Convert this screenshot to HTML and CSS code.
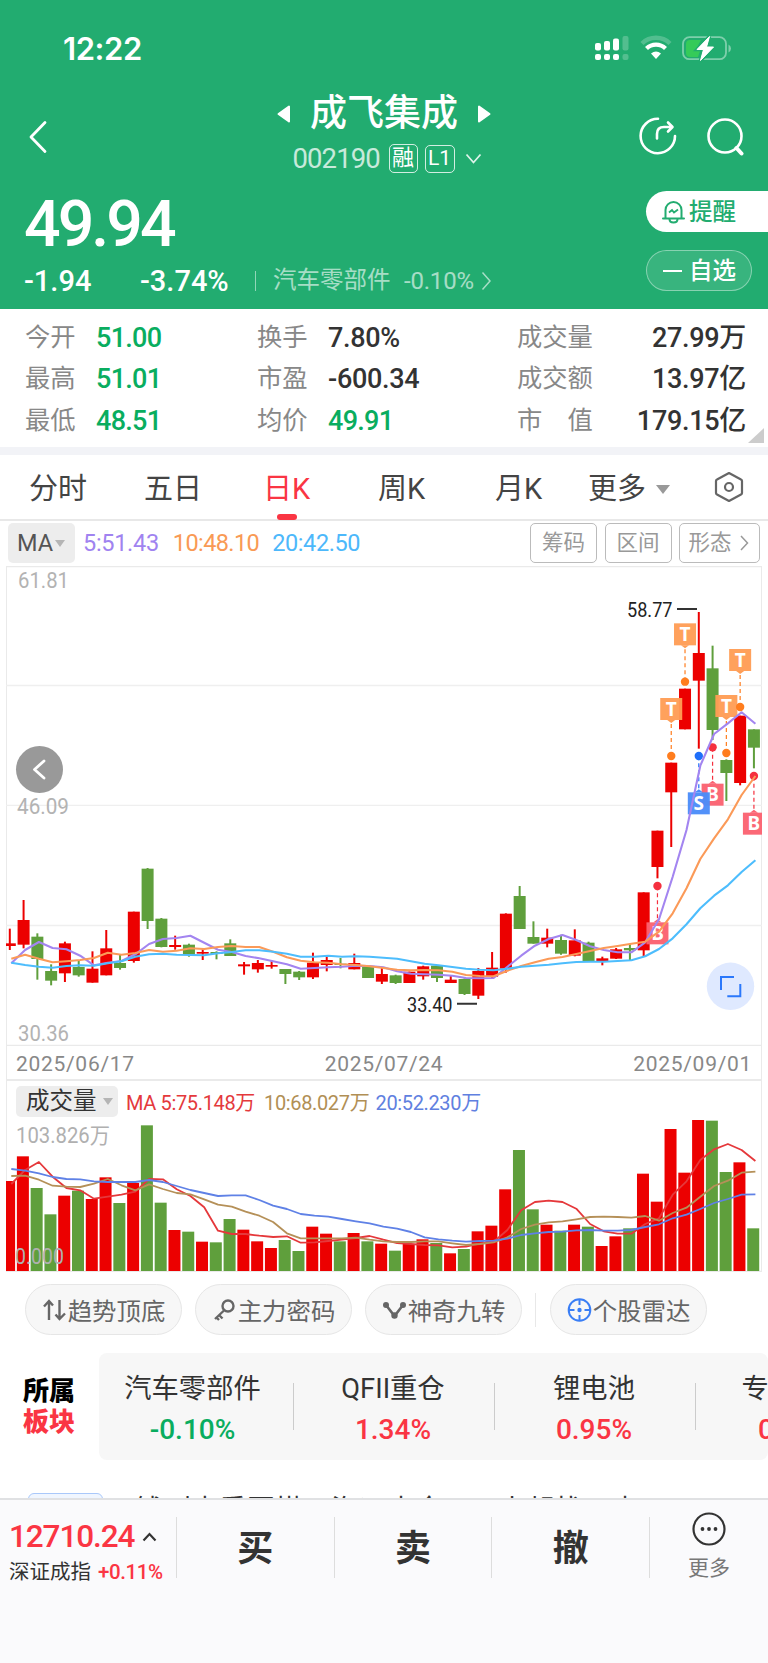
FILE: index.html
```html
<!DOCTYPE html>
<html lang="zh-CN">
<head>
<meta charset="utf-8">
<title>成飞集成 002190</title>
<link rel="stylesheet" href="styles.css">
</head>
<body>
<div class="app">
  <header class="head">
    <div class="status">
      <span class="clock">12:22</span>
      <svg class="status-icons" width="140" height="28" viewBox="0 0 140 28">
        <g fill="#fff">
          <rect x="0" y="8" width="6" height="7.5" rx="2"/><rect x="9" y="6" width="6" height="9.5" rx="2"/><rect x="18" y="3.5" width="6" height="12" rx="2"/>
          <rect x="0" y="19" width="6" height="6" rx="2"/><rect x="9" y="19" width="6" height="6" rx="2"/><rect x="18" y="19" width="6" height="6" rx="2"/>
          <g opacity=".22"><rect x="27.5" y="1" width="6" height="14.500" rx="2"/><rect x="27.500" y="19" width="6" height="6" rx="2"/></g>
        </g>
        <g fill="none" stroke="#fff">
          <path d="M47 8.500a20 20 0 0 1 28 0" stroke-width="4.500" opacity=".22"/>
          <path d="M51.500 13.500a13.500 13.500 0 0 1 19 0" stroke-width="4.200"/>
        </g>
        <path d="M56 18.500q5-4 10 0l-5 5.500z" fill="#fff"/>
        <rect x="88" y="2.200" width="43" height="22" rx="6.500" fill="none" stroke="#fff" stroke-opacity=".42" stroke-width="1.800"/>
        <path d="M133.500 9.500q2.500 1.500 2.500 4t-2.500 4z" fill="#fff" opacity=".42"/>
        <path d="M95 5h11l-6 11h5l-2 6H95q-4 0-4-4V9q0-4 4-4z" fill="#35cb59"/>
        <path d="M114.500 1.500L102 14.500h6.500L105.500 25.500 118.500 12h-7z" fill="#fff" stroke="#22ac70" stroke-width="3.500" paint-order="stroke"/>
        <path d="M114.500 1.500L102 14.500h6.500L105.500 25.500 118.500 12h-7z" fill="#fff" stroke="#fff" stroke-width="1" stroke-linejoin="round"/>
      </svg>
    </div>
    <div class="nav">
      <svg class="back" width="20" height="34" viewBox="0 0 20 34"><path d="M17 2.500L3 17l14 14.500" fill="none" stroke="#fff" stroke-width="2.800" stroke-linecap="round" stroke-linejoin="round"/></svg>
      <div class="title-box">
        <div class="title-row">
          <svg width="14" height="18" viewBox="0 0 14 18"><path d="M12 1.500v15L1.500 9z" fill="#fff" stroke="#fff" stroke-linejoin="round" stroke-width="2"/></svg>
          <h1 class="title">成飞集成</h1>
          <svg width="14" height="18" viewBox="0 0 14 18"><path d="M2 1.500v15L12.500 9z" fill="#fff" stroke="#fff" stroke-linejoin="round" stroke-width="2"/></svg>
        </div>
        <div class="code-row">
          <span class="code">002190</span><span class="badge">融</span><span class="badge badge-l1">L1</span>
          <svg width="17" height="12" viewBox="0 0 17 12"><path d="M1.500 1.500l7 8 7-8" fill="none" stroke="#fff" stroke-width="1.800" opacity=".85"/></svg>
        </div>
      </div>
      <div class="nav-icons">
        <svg width="40" height="40" viewBox="0 0 40 40" fill="none" stroke="#fff" stroke-width="2.600" stroke-linecap="round" stroke-linejoin="round"><path d="M20 2.800A17.200 17.200 0 1 0 37 20M19 22.500v-4.500q0-7 7-7h7M30 6.500l4.500 4.500L30 15.500"/></svg>
        <svg width="40" height="40" viewBox="0 0 40 40" fill="none" stroke="#fff" stroke-width="2.600"><circle cx="20" cy="20" r="16.500"/><path d="M31.500 32l5 5.500" stroke-width="4" stroke-linecap="round"/></svg>
      </div>
    </div>
    <div class="quote">
      <div class="quote-main">
        <div class="price">49.94</div>
        <div class="change">
          <span class="delta">-1.94</span><span class="pct">-3.74%</span><i class="bar"></i>
          <span class="industry">汽车零部件</span><span class="industry-pct">-0.10%</span>
          <svg width="11" height="20" viewBox="0 0 11 20"><path d="M1.500 1.500L9 10 1.500 18.500" fill="none" stroke="#fff" stroke-width="1.500" opacity=".6"/></svg>
        </div>
      </div>
      <div class="quote-side">
        <div class="pill pill-alert">
          <svg width="23" height="24" viewBox="0 0 23 24" fill="none" stroke="#22ac70" stroke-width="2"><path d="M3.500 18V10a8 8 0 0 1 16 0v8M1 18.500h21" stroke-linecap="round"/><path d="M7 12.500l3-2.500 2 2.500 4-3" stroke-width="1.800"/><path d="M7.500 19q0 3.500 4 3.500t4-3.500"/></svg>
          <span>提醒</span>
        </div>
        <div class="pill pill-fav"><i class="minus"></i><span>自选</span></div>
      </div>
    </div>
  </header>

  <section class="stats">
    <dl class="stat-col c1"><dt>今开</dt><dd class="g">51.00</dd><dt>最高</dt><dd class="g">51.01</dd><dt>最低</dt><dd class="g">48.51</dd></dl>
    <dl class="stat-col c2"><dt>换手</dt><dd>7.80%</dd><dt>市盈</dt><dd>-600.34</dd><dt>均价</dt><dd class="g">49.91</dd></dl>
    <dl class="stat-col c3"><dt>成交量</dt><dd>27.99万</dd><dt>成交额</dt><dd>13.97亿</dd><dt>市　值</dt><dd>179.15亿</dd></dl>
    <i class="corner"></i>
  </section>

  <nav class="tabs">
    <span>分时</span><span>五日</span><span class="on">日K</span><span>周K</span><span>月K</span><span class="more">更多<i class="tri"></i></span>
    <svg width="30" height="32" viewBox="0 0 30 32" fill="none" stroke="#666" stroke-width="2.200" stroke-linejoin="round"><path d="M15 2l12 6.500q1 .5 1 1.500v12q0 1-1 1.500L15 30 3 23.500q-1-.5-1-1.500V10q0-1 1-1.500z"/><circle cx="15" cy="16" r="4"/></svg>
  </nav>

  <div class="ma-row">
    <span class="chip">MA<i class="tri small"></i></span>
    <span class="ma purple">5:51.43</span><span class="ma orange">10:48.10</span><span class="ma blue">20:42.50</span>
    <div class="tools"><span>筹码</span><span>区间</span><span>形态 <svg width="9" height="18" viewBox="0 0 9 18"><path d="M1 2l6.500 7L1 16" fill="none" stroke="#999" stroke-width="1.500"/></svg></span></div>
  </div>

  <svg id="kline" class="chart" width="768" height="480" viewBox="0 566 768 480"></svg>
  <div class="dates"><span>2025/06/17</span><span>2025/07/24</span><span>2025/09/01</span></div>
  <div class="vol-head">
    <span class="chip vol-chip">成交量<i class="tri small"></i></span>
    <span class="red">MA 5:75.148万</span><span class="tan">10:68.027万</span><span class="indigo">20:52.230万</span>
  </div>
  <svg id="volume" class="chart" width="768" height="152" viewBox="0 1120 768 152"></svg>

  <div class="pills">
    <span class="tool"><svg width="25" height="24" viewBox="0 0 25 24" fill="none" stroke="#666" stroke-width="2.400"><path d="M7 22V3M2 8.500L7 3l4 4.500M17.500 2v19M23 15.500L17.500 21l-4-4.500"/></svg>趋势顶底</span>
    <span class="tool"><svg width="25" height="24" viewBox="0 0 25 24" fill="none" stroke="#666" stroke-width="2.400"><circle cx="16" cy="8" r="5.500"/><path d="M12 12.500L3 21M7 17l3.500 3.500M4.500 19.500l2.500 2.500"/></svg>主力密码</span>
    <span class="tool"><svg width="25" height="24" viewBox="0 0 25 24" fill="none" stroke="#666" stroke-width="2.600"><path d="M4 7l8.500 11L21 7"/><g fill="#666" stroke="none"><circle cx="4" cy="7" r="3"/><circle cx="21" cy="7" r="3"/><circle cx="12.500" cy="17.500" r="3.200"/></g></svg>神奇九转</span>
    <i class="split"></i>
    <span class="tool"><svg width="25" height="24" viewBox="0 0 25 24" fill="none" stroke="#3a7ef5" stroke-width="2"><circle cx="12.500" cy="12" r="10.800"/><path d="M12.500 1v6M12.500 17v6M1.500 12h6M17.500 12h6"/><circle cx="12.500" cy="12" r="2.200" fill="#3a7ef5" stroke="none"/></svg>个股雷达</span>
  </div>

  <section class="sector">
    <div class="sector-label"><b>所属</b><b class="hot">板块</b></div>
    <div class="sector-list">
      <div class="item"><span>汽车零部件</span><em class="g">-0.10%</em></div>
      <div class="item"><span>QFII重仓</span><em>1.34%</em></div>
      <div class="item"><span>锂电池</span><em>0.95%</em></div>
      <div class="item"><span>专精特新</span><em>0.95%</em></div>
    </div>
  </section>

  <div class="news"><i class="tag"></i><span>钱到央重回搭，海运内全，一上起找，内</span></div>

  <footer class="foot">
    <div class="index">
      <div class="idx-top">12710.24<svg width="15" height="10" viewBox="0 0 15 10"><path d="M1.500 8.500l6-6.500 6 6.500" fill="none" stroke="#333" stroke-width="2.200"/></svg></div>
      <div class="idx-sub">深证成指<span>+0.11%</span></div>
    </div>
    <div class="act">买</div><div class="act">卖</div><div class="act">撤</div>
    <div class="act-more"><svg width="36" height="36" viewBox="0 0 36 36"><circle cx="18" cy="18" r="15.500" fill="none" stroke="#333" stroke-width="2.200"/><g fill="#333"><circle cx="11.500" cy="18" r="1.900"/><circle cx="18" cy="18" r="1.900"/><circle cx="24.500" cy="18" r="1.900"/></g></svg><span>更多</span></div>
  </footer>
</div>
<script src="chart.js"></script>
</body>
</html>
```
FILE: styles.css
```css
* { box-sizing: border-box; }
body { margin: 0; background: #fff; font-family: Roboto, "Noto Sans CJK SC", sans-serif; color: #333; }
.app { width: 768px; height: 1663px; overflow: hidden; display: flex; flex-direction: column; }
.app > * { flex-shrink: 0; }
svg { display: block; flex-shrink: 0; }
i, em { font-style: normal; }
span, h1 { white-space: nowrap; }
.g { color: #09ad5f !important; }

/* header */
.head { height: 309px; background: #22ac70; color: #fff; display: flex; flex-direction: column; }
.status { height: 98px; padding: 0 33px 0 63px; display: flex; justify-content: space-between; align-items: center; }
.clock { font: 600 31px/98px Inter, sans-serif; letter-spacing: -.4px; }
.nav { height: 90px; padding: 0 23px 0 28px; display: grid; grid-template-columns: 116px 1fr 107px; }
.back { margin-top: 22px; }
.title-box { display: flex; flex-direction: column; align-items: center; padding-right: 6px; }
.title-row { height: 34px; display: flex; align-items: center; gap: 19px; margin: -1px 8px 0 0; }
.title { margin: 0; font-size: 37px; line-height: 34px; font-weight: 500; }
.code-row { height: 32px; margin: 12px 2px 0 0; display: flex; align-items: center; }
.code { font-size: 27.500px; letter-spacing: -.9px; opacity: .75; line-height: 34px; margin-right: 8px; width: 88px; }
.badge { width: 29px; height: 29px; border: 1.500px solid rgba(255,255,255,.8); border-radius: 5px; font-size: 22px; line-height: 26px; text-align: center; margin: -1px 7px 0 0; }
.badge-l1 { width: 30px; height: 28px; font-size: 21px; line-height: 25px; margin-right: 10px; }
.nav-icons { display: flex; justify-content: space-between; padding: 18px 0 0; }
.quote { display: flex; justify-content: space-between; height: 121px; }
.quote-main { padding-left: 24px; }
.price { font-size: 64.500px; line-height: 72px; height: 74px; font-weight: 500; letter-spacing: -3px; }
.change { display: flex; align-items: center; height: 38px; font-size: 29px; }
.delta { width: 116px; font-weight: 500; }
.pct { width: 115px; font-weight: 500; }
.bar { width: 1px; height: 20px; background: rgba(255,255,255,.5); margin-right: 17px; }
.industry { font-size: 23.500px; opacity: .6; width: 131px; line-height: 32px; padding-bottom: 2px; }
.industry-pct { font-size: 24px; opacity: .6; width: 77px; letter-spacing: -.2px; }
.quote-side { width: 122px; padding-top: 3px; display: flex; flex-direction: column; gap: 18px; }
.pill { height: 41px; display: flex; align-items: center; padding-left: 16px; font-size: 23.500px; line-height: 38px; font-weight: 500; }
.pill svg { margin-right: 4px; }
.pill-alert { background: #fff; color: #22ac70; border-radius: 21px 0 0 21px; }
.pill-fav { width: 106px; border: 1.500px solid rgba(255,255,255,.4); background: rgba(255,255,255,.1); border-radius: 21px; }
.minus { width: 19px; height: 2px; background: #fff; margin-right: 7px; }

/* statistics */
.stats { height: 146px; padding: 9px 22px 0 25px; display: flex; border-bottom: 8px solid #f2f3f7; position: relative; }
.stat-col { margin: 0; display: grid; grid-auto-rows: 41.300px; line-height: 41px; grid-template-columns: 71px 1fr; }
.c1 { width: 232px; }
.c2 { width: 260px; }
.c3 { width: 229px; grid-template-columns: 100px 1fr; }
.c3 dd { text-align: right; }
.stat-col dt { font-size: 25.300px; color: #888; position: relative; top: -1px; }
.stat-col dd { margin: 0; font-size: 27px; font-weight: 500; letter-spacing: -.3px; color: #333; white-space: nowrap; }
.c1 dd, .c2 dd.g { letter-spacing: -.7px; }
.corner { position: absolute; right: 4px; bottom: 4px; border-left: 16px solid transparent; border-bottom: 15px solid #ccc; }

/* period tabs */
.tabs { height: 66px; padding-left: 29px; border-bottom: 2px solid #e8e8e8; display: grid; grid-template-columns: 115px 119px 115px 117px 93px 126px 1fr; align-items: center; font-size: 29px; line-height: 68px; color: #444; }
.tabs span { height: 64px; }
.tabs .on { color: #fa3543; position: relative; }
.tabs .on::after { content: ""; position: absolute; left: 14px; bottom: -1px; width: 20px; height: 6px; border-radius: 3px; background: #fa3543; }
.tabs .more { display: flex; align-items: center; padding-top: 4px; }
.tri { border: 7px solid transparent; border-top: 9px solid #999; border-bottom: 0; margin-left: 10px; }
.tri.small { border-width: 7px 5px 0; border-top-color: #b5b5b5; margin-left: 2px; }

.ma-row { height: 45px; padding: 0 8px 1px; display: flex; align-items: center; }
.chip { background: #ededed; border-radius: 5px; display: flex; align-items: center; }
.ma-row .chip { width: 67px; height: 40px; padding-left: 9px; font-size: 23.500px; color: #555; margin-right: 8px; }
.ma { font-size: 23.500px; margin-right: 14px; letter-spacing: -.3px; }
.ma.orange { letter-spacing: -.6px; margin-right: 13px; }
.ma.blue { letter-spacing: -.4px; }
.purple { color: #a083f0; } .orange { color: #f99a55; } .blue { color: #4db8fb; }
.tools { margin-left: auto; display: flex; gap: 7.500px; }
.tools span { height: 40px; width: 67px; border: 1.500px solid #bbb; border-radius: 5px; display: flex; align-items: center; justify-content: center; font-size: 21.500px; line-height: 34px; padding-bottom: 1px; color: #999; gap: 8px; }
.tools span:last-child { width: 81px; padding-right: 2px; }

.chart text { font-family: Roboto, "Noto Sans CJK SC", sans-serif; }
.chart .mark { font-family: "Noto Sans", sans-serif; }
.dates { height: 36px; margin: -1px 6px 0; padding: 0 9px; border: 1px solid #eaeaea; border-top: 0; border-bottom-width: 2px; display: flex; justify-content: space-between; font-size: 21px; line-height: 39px; letter-spacing: .7px; color: #888; }

.vol-head { height: 39px; margin: 0 6px; border: 1px solid #eaeaea; border-width: 0 1px; padding: 4px 0 2px 9px; display: flex; align-items: center; font-size: 20px; letter-spacing: -.35px; }
.vol-chip { width: 102px; height: 31px; padding-left: 10px; font-size: 23.500px; margin-right: 8px; line-height: 31px; letter-spacing: 0; }
.vol-chip .tri { margin-left: 6px; }
.red { color: #e4393c; width: 138px; } .tan { color: #b18f55; width: 111.500px; } .indigo { color: #6080e0; }

/* shortcut pills */
.pills { height: 81px; padding: 12px 0 0 25px; display: flex; gap: 13px; }
.tool { width: 157px; height: 51px; background: #f7f7f7; border: 1px solid #e6e6e6; border-radius: 26px; display: flex; align-items: center; justify-content: center; font-size: 24.400px; color: #666; gap: 1px; }
.split { width: 1px; height: 34px; margin: 9px 1px 0 0; background: #e8e8e8; }

/* sectors */
.sector { display: flex; height: 107px; padding-left: 23px; }
.sector-label { width: 76px; display: flex; flex-direction: column; padding-top: 23px; font-size: 26px; line-height: 31px; font-weight: 700; color: #000; }
.hot { color: #fa3543; }
.sector-list { width: 669px; background: #f7f7f7; border-radius: 8px; display: flex; overflow: hidden; }
.item { width: 201px; flex-shrink: 0; display: flex; flex-direction: column; align-items: center; padding: 16px 3px 0 0; position: relative; font-size: 27.300px; line-height: 40px; }
.item:first-child { width: 195px; padding-right: 8px; }
.item:last-child { padding-right: 1px; }
.item:not(:last-child)::after { content: ""; position: absolute; right: 0; top: 30px; width: 1px; height: 47px; background: #ccc; }
.item em { font-size: 28px; line-height: 41px; font-weight: 500; color: #fa3543; }

.news { height: 38px; padding: 33px 0 0 28px; display: flex; overflow: hidden; font-size: 28px; }
.tag { width: 75px; height: 40px; border: 1.500px solid #a9c8fa; border-radius: 6px; background: #f0f6ff; margin-right: 32px; flex-shrink: 0; }
.news span { line-height: 36px; }

/* trade bar */
.foot { height: 165px; border-top: 2px solid #e0e1e3; background: #fafafc; display: flex; padding-top: 17px; }
.index { width: 176px; height: 61px; padding-left: 9px; }
.idx-top { display: flex; align-items: center; gap: 8px; color: #fa3543; font-size: 31.500px; font-weight: 500; letter-spacing: -1.100px; line-height: 39px; }
.idx-sub { font-size: 20.500px; line-height: 32px; white-space: nowrap; }
.idx-sub span { color: #fa3543; margin-left: 7px; letter-spacing: -.4px; font-weight: 500; }
.act { width: 157.700px; height: 61px; border-left: 1px solid #ddd; font-size: 36px; line-height: 64px; text-align: center; font-weight: 600; }
.act-more { flex: 1; height: 61px; border-left: 1px solid #ddd; display: flex; flex-direction: column; align-items: center; font-size: 21px; line-height: 42px; color: #777; }
.act-more svg { margin-top: -6px; }
```
FILE: chart.js
```js
// Vertical chart units are thirds of a pixel, measured from each chart's own base line.
const RED = '#ec0000', GREEN = '#5f9f3c', PITCH = 13.78, X0 = 9.8;
const cx = i => X0 + PITCH * i;
const ky = v => 840 + v / 3;
const vy = v => 1080 + v / 3;

// [rising, body top, body bottom, high, low]
const candles = [
  [1,310,318,266,330],[1,240,314,180,325],[0,290,357,280,419],[0,393,422,373,436],[1,310,400,305,426],
  [0,381,406,360,410],[1,386,428,334,428],[1,325,406,270,406],[0,369,384,345,389],[1,215,363,215,368],
  [0,86,243,84,267],[0,236,321,234,322],[1,315,321,287,329],[0,314,345,311,350],[1,336,341,328,360],
  [0,336,342,334,358],[0,310,348,298,348],[1,373,379,366,404],[1,369,388,360,398],[1,375,380,362,386],
  [0,387,402,387,432],[0,395,412,393,420],[1,368,412,338,417],[1,360,375,348,394],[0,371,375,354,385],
  [1,369,388,341,388],[0,380,414,378,414],[1,402,425,381,432],[0,406,429,404,432],[1,395,429,395,429],
  [1,379,409,377,419],[0,377,414,375,426],[1,419,429,407,429],[0,417,462,415,465],[1,393,467,384,477],
  [1,383,410,336,414],[1,221,386,220,398],[0,168,267,138,267],[0,291,311,244,311],[1,293,311,266,322],
  [0,300,341,284,344],[1,301,347,268,349],[0,308,364,305,365],[1,355,363,350,376],[1,328,356,324,357],
  [0,324,331,312,361],[1,157,331,157,348],[1,-28,81,-28,115],[1,-232,-143,-232,21],[1,-454,-332,-454,-332],
  [1,-561,-478,-684,-274],[0,-515,-330,-583,-300],[0,-240,-201,-242,-117],[1,-373,-171,-373,-164],[0,-332,-277,-332,-215]
];
const ma5 = [370,330,306,324,328,347,376,368,363,343,312,297,294,287,308,329,336,348,355,364,373,386,384,382,380,377,378,382,394,401,403,404,407,414,415,414,380,347,317,297,285,300,319,330,337,337,307,238,110,-30,-223,-318,-350,-383,-349];
const ma10 = [356,344,356,367,364,360,354,338,344,339,330,335,332,325,327,321,318,321,321,335,352,362,367,368,373,375,379,384,389,391,390,391,395,405,408,409,392,378,367,356,351,342,333,324,318,311,305,275,220,145,57,-5,-62,-135,-192];
const ma20 = [368,375,380,383,378,376,377,370,364,350,343,341,344,345,346,340,336,331,331,335,341,350,350,347,350,349,350,353,356,364,371,376,381,386,389,391,386,380,377,374,370,366,365,365,363,361,349,327,295,253,205,167,136,96,61];

const volumes = [303,229,324,403,347,332,357,292,369,309,136,368,450,455,485,487,417,449,484,504,480,513,440,461,484,459,484,491,512,492,478,489,520,507,454,437,328,210,388,434,452,434,440,498,469,445,281,365,147,278,118,122,276,247,445];
const vma5 = [312,270,246,290,324,331,356,350,344,335,297,298,328,348,382,452,462,462,467,471,469,488,487,483,479,474,468,479,489,492,495,496,502,500,491,485,450,391,366,362,366,386,432,454,461,461,432,415,344,304,240,208,192,210,243];
const vma10 = [288,287,299,317,320,321,311,297,316,331,313,327,339,343,358,374,380,395,407,426,460,475,475,475,475,473,479,484,486,486,484,484,490,495,492,487,472,447,434,427,424,418,411,410,411,413,408,422,399,383,350,318,302,278,275];
const vma20 = [267,272,280,291,297,298,304,306,306,306,300,306,318,330,339,348,346,346,360,377,387,402,407,410,417,424,430,440,446,456,472,478,482,485,483,482,476,465,460,456,455,451,450,452,452,450,441,433,415,404,387,369,357,344,343];

const hline = (y, c = '#efefef') => `<path d="M6 ${y}H762" stroke="${c}" stroke-width="1.3"/>`;
const curve = (a, f, c, w) => `<polyline points="${a.map((v, i) => (cx(i) + 1.5).toFixed(1) + ',' + f(v).toFixed(1)).join(' ')}" fill="none" stroke="${c}" stroke-width="${w}" stroke-linejoin="round"/>`;
const label = (x, y, s, w, size, c) => `<text x="${x}" y="${y}" textLength="${w}" lengthAdjust="spacingAndGlyphs" font-size="${size}" fill="${c}">${s}</text>`;

// kind, candle index, first edge of the flag, dot position
const flags = [['T',49,-650,-475],['T',48,-426,-252],['T',52,-435,-261],['T',53,-573,-399],['B',51,-169,-278],['S',50,-143,-252],['B',54,-82,-192],['B',47,247,138]];
const flagColor = { T: ['#ff9d55', '#ff7d1e'], B: ['#fb6270', '#f5303f'], S: ['#4b8df9', '#1f6ffa'] };
function flag([k, i, top, dot]) {
  const x = cx(i), y = ky(top), d = ky(dot), [fill, strong] = flagColor[k];
  const tip = k === 'T' ? `M${x - 4} ${y + 22}l4 3 4-3z` : `M${x - 4} ${y}l4-3 4 3z`;
  const from = k === 'T' ? y + 26 : y - 4;
  return `<path d="M${x} ${from}V${d}" stroke="${strong}" stroke-width="1.2" stroke-dasharray="4 3"/>
    <circle cx="${x}" cy="${d}" r="4.200" fill="${strong}"/>
    <path d="${tip}" fill="${fill}"/><rect x="${x - 11}" y="${y}" width="22" height="22" fill="${fill}" opacity=".96"/>
    <text class="mark" x="${x}" y="${y + 17.5}" text-anchor="middle" font-size="19" font-weight="700" fill="#fff">${k}</text>`;
}

const bodies = candles.map(([up, t, b, h, l], i) => {
  const c = up ? RED : GREEN, x = cx(i);
  return `<path d="M${x} ${ky(h)}V${ky(l)}" stroke="${c}" stroke-width="2"/><rect x="${x - 6}" y="${ky(t)}" width="12" height="${(b - t) / 3}" fill="${c}"/>`;
}).join('');

document.getElementById('kline').innerHTML = `
  <clipPath id="plot"><rect x="6" y="560" width="756" height="490"/></clipPath>
  <path d="M6.500 566V1046M761.500 566V1046" stroke="#eaeaea"/>
  ${hline(566.5, '#eaeaea')}${hline(685.5)}${hline(805.3)}${hline(925.5)}${hline(1045.3, '#eaeaea')}
  ${label(18, 588, '61.81', 51, 22, '#b3b3b3')}${label(17, 814, '46.09', 52, 22, '#b3b3b3')}${label(18, 1040.500, '30.36', 51, 22, '#b3b3b3')}
  <g clip-path="url(#plot)">${bodies}${flags.map(flag).join('')}
  ${curve(ma5, ky, '#a385f0', 2.1)}${curve(ma10, ky, '#fb9a58', 2.1)}${curve(ma20, ky, '#4dbdfd', 2.1)}</g>
  ${label(627, 616.500, '58.77', 45.500, 20, '#222')}<path d="M677 609h20M457 1003.700h20" stroke="#333" stroke-width="2"/>
  ${label(407, 1011.500, '33.40', 45.500, 20, '#222')}
  <circle cx="39.500" cy="769.500" r="23.500" fill="#999"/><path d="M44 761l-9.500 8.500 9.500 8.500" fill="none" stroke="#fff" stroke-width="2.800" stroke-linecap="round" stroke-linejoin="round"/>
  <circle cx="730.500" cy="986.300" r="23.700" fill="#dfe9ff"/><path d="M721 990v-13h13M740.300 984v12.300h-13" fill="none" stroke="#2b78fb" stroke-width="2"/>`;

document.getElementById('volume').innerHTML = `
  <clipPath id="vplot"><rect x="6" y="1110" width="756" height="170"/></clipPath>
  <path d="M6.500 1120V1271.500M761.500 1120V1271.500" stroke="#eaeaea"/>${hline(1271.5, '#eaeaea')}
  <g clip-path="url(#vplot)">${volumes.map((v, i) => `<rect x="${cx(i) - 6.700}" y="${vy(v)}" width="12" height="${1271 - vy(v)}" fill="${candles[i][0] ? RED : GREEN}"/>`).join('')}
  ${curve(vma5, vy, '#e5383b', 1.8)}${curve(vma10, vy, '#b59058', 1.8)}${curve(vma20, vy, '#5f81e6', 1.8)}</g>
  ${label(16, 1143, '103.826万', 94, 21.5, '#b0b0b0')}${label(15, 1264, '0.000', 49, 21.5, '#b0b0b0')}`;
```
